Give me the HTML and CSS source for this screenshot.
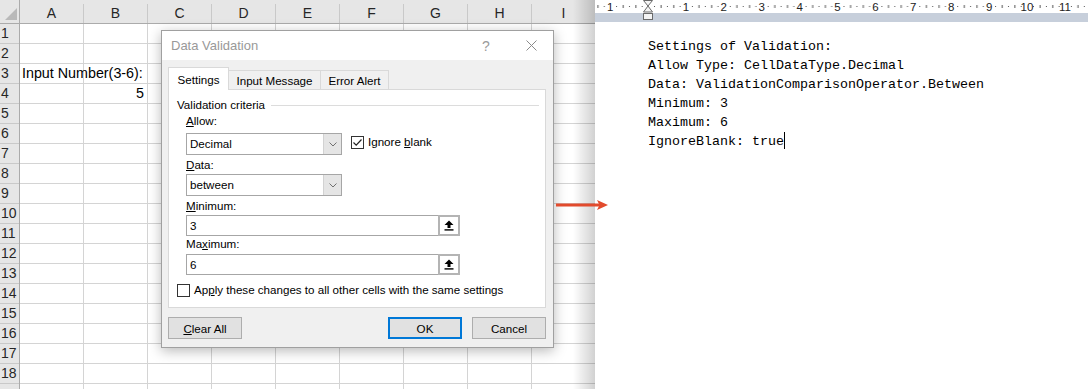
FILE: index.html
```html
<!DOCTYPE html>
<html lang="en">
<head>
  <meta charset="UTF-8">
  <title>Data Validation</title>
  <link rel="stylesheet" href="styles.css">
</head>
<body>
<div class="screen">

  <div class="excel">
    <div class="sheet">
      <div class="corner">
        <svg width="19" height="23" viewBox="0 0 19 23"><polygon points="5,20 17,20 17,8" fill="#b9b9b9"/></svg>
      </div>
      <div class="col-heads">
        <div class="col-head">A</div>
        <div class="col-head">B</div>
        <div class="col-head">C</div>
        <div class="col-head">D</div>
        <div class="col-head">E</div>
        <div class="col-head">F</div>
        <div class="col-head">G</div>
        <div class="col-head">H</div>
        <div class="col-head">I</div>
      </div>
      <div class="row-heads">
        <div class="row-head">1</div>
        <div class="row-head">2</div>
        <div class="row-head">3</div>
        <div class="row-head">4</div>
        <div class="row-head">5</div>
        <div class="row-head">6</div>
        <div class="row-head">7</div>
        <div class="row-head">8</div>
        <div class="row-head">9</div>
        <div class="row-head">10</div>
        <div class="row-head">11</div>
        <div class="row-head">12</div>
        <div class="row-head">13</div>
        <div class="row-head">14</div>
        <div class="row-head">15</div>
        <div class="row-head">16</div>
        <div class="row-head">17</div>
        <div class="row-head">18</div>
        <div class="row-head"></div>
      </div>
      <div class="cells">
        <div class="cell-text a3">Input Number(3-6):</div>
        <div class="cell-text b4">5</div>
      </div>
    </div>

    <div class="dialog">
      <div class="dlg-title">
        <span class="dlg-name">Data Validation</span>
        <span class="dlg-help">?</span>
        <span class="dlg-close">
          <svg width="11" height="11" viewBox="0 0 11 11"><path d="M0.5 0.5 L10.5 10.5 M10.5 0.5 L0.5 10.5" stroke="#8a8a8a" stroke-width="1"/></svg>
        </span>
      </div>
      <div class="dlg-body">
        <div class="tabs">
          <div class="tab active">Settings</div>
          <div class="tab t-input">Input Message</div>
          <div class="tab t-error">Error Alert</div>
        </div>
        <div class="panel">
          <div class="group-title"><span>Validation criteria</span></div>
          <div class="fields">
            <div class="label first"><u>A</u>llow:</div>
            <div class="field-row">
              <div class="combo">
                <span class="value">Decimal</span>
                <span class="drop"><svg width="8" height="5" viewBox="0 0 8 5"><polyline points="0.5,0.5 4,4 7.5,0.5" fill="none" stroke="#707070"/></svg></span>
              </div>
              <div class="check ignore">
                <span class="box"><svg width="11" height="11" viewBox="0 0 11 11"><polyline points="1.5,5.5 4.2,8.2 9.5,2.5" fill="none" stroke="#222" stroke-width="1.2"/></svg></span>
                <span>Ignore <u>b</u>lank</span>
              </div>
            </div>
            <div class="label"><u>D</u>ata:</div>
            <div class="combo control">
              <span class="value">between</span>
              <span class="drop"><svg width="8" height="5" viewBox="0 0 8 5"><polyline points="0.5,0.5 4,4 7.5,0.5" fill="none" stroke="#707070"/></svg></span>
            </div>
            <div class="label"><u>M</u>inimum:</div>
            <div class="input control">
              <span class="value">3</span>
              <span class="spin"><svg width="10" height="11" viewBox="0 0 10 11"><polygon points="5,0.5 9.5,5 6.5,5 6.5,8 3.5,8 3.5,5 0.5,5" fill="#000"/><rect x="0.5" y="9.2" width="9" height="1.4" fill="#000"/></svg></span>
            </div>
            <div class="label tight">Ma<u>x</u>imum:</div>
            <div class="input control last">
              <span class="value">6</span>
              <span class="spin"><svg width="10" height="11" viewBox="0 0 10 11"><polygon points="5,0.5 9.5,5 6.5,5 6.5,8 3.5,8 3.5,5 0.5,5" fill="#000"/><rect x="0.5" y="9.2" width="9" height="1.4" fill="#000"/></svg></span>
            </div>
          </div>
          <div class="check apply">
            <span class="box"></span>
            <span>Ap<u>p</u>ly these changes to all other cells with the same settings</span>
          </div>
        </div>
        <div class="buttons">
          <button class="btn"><u>C</u>lear All</button>
          <button class="btn ok">OK</button>
          <button class="btn cancel">Cancel</button>
        </div>
      </div>
    </div>
  </div>

  <div class="word">
    <svg class="ruler" width="493" height="22" viewBox="0 0 493 22">
      <defs>
        <pattern id="marks" x="53" y="0" width="37.9" height="13" patternUnits="userSpaceOnUse">
          <rect x="6" y="6" width="1" height="1" fill="#555"/>
          <rect x="12.6" y="5" width="1" height="3" fill="#555"/>
          <rect x="18.9" y="6" width="1" height="1" fill="#555"/>
          <rect x="25.3" y="5" width="1" height="3" fill="#555"/>
          <rect x="31.6" y="6" width="1" height="1" fill="#555"/>
        </pattern>
      </defs>
      <rect width="493" height="13" fill="#fff"/>
      <rect y="13" width="493" height="9" fill="#c7cfdb"/>
      <rect width="493" height="13" fill="url(#marks)"/>
      <g class="ruler-nums">
        <text x="15.1" y="10.5">1</text>
        <text x="90.9" y="10.5">1</text>
        <text x="128.8" y="10.5">2</text>
        <text x="166.7" y="10.5">3</text>
        <text x="204.6" y="10.5">4</text>
        <text x="242.5" y="10.5">5</text>
        <text x="280.4" y="10.5">6</text>
        <text x="318.3" y="10.5">7</text>
        <text x="356.2" y="10.5">8</text>
        <text x="394.1" y="10.5">9</text>
        <text x="432" y="10.5">10</text>
        <text x="469.9" y="10.5">11</text>
      </g>
      <g fill="#f4f4f4" stroke="#6a6a6a" stroke-width="1">
        <polygon points="48.5,0.5 57.5,0.5 53,6"/>
        <polygon points="53,6 48.5,12 57.5,12"/>
        <rect x="48.5" y="13.5" width="9" height="6"/>
      </g>
    </svg>
    <div class="doc">
      <div>Settings of Validation:</div>
      <div>Allow Type: CellDataType.Decimal</div>
      <div>Data: ValidationComparisonOperator.Between</div>
      <div>Minimum: 3</div>
      <div>Maximum: 6</div>
      <div>IgnoreBlank: true<span class="caret"></span></div>
    </div>
  </div>

  <svg class="arrow" width="56" height="14" viewBox="0 0 56 14">
    <rect x="2" y="5.5" width="44" height="3" fill="#e24b2d"/>
    <polygon points="43,2 54,7 43,12 45.5,7" fill="#e24b2d"/>
  </svg>

</div>
</body>
</html>
```

FILE: styles.css
```css
body {
  margin: 0;
  width: 1088px;
  height: 389px;
  overflow: hidden;
  font-family: "Liberation Sans", Arial, sans-serif;
  background: #fff;
}

.screen {
  display: flex;
  height: 389px;
  position: relative;
}

/* spreadsheet */

.excel {
  width: 595px;
  flex: none;
  position: relative;
  overflow: hidden;
}

.sheet {
  display: grid;
  grid-template-columns: 20px 576px;
  grid-template-rows: 24px auto;
}

.corner {
  background: #e6e6e6;
  border-right: 1px solid #ababab;
  border-bottom: 1px solid #ababab;
}

.corner svg {
  display: block;
}

.col-heads {
  display: flex;
  align-items: flex-end;
  background: #e6e6e6;
  border-bottom: 1px solid #ababab;
}

.col-head {
  width: 64px;
  height: 19px;
  flex: none;
  box-sizing: border-box;
  border-right: 1px solid #c9c9c9;
  text-align: center;
  font-size: 14px;
  line-height: 19px;
  color: #262626;
}

.row-heads {
  background: #e6e6e6;
  border-right: 1px solid #ababab;
}

.row-head {
  height: 20px;
  box-sizing: border-box;
  border-bottom: 1px solid #c9c9c9;
  padding-left: 1px;
  font-size: 14px;
  line-height: 19px;
  color: #262626;
}

.cells {
  display: grid;
  grid-template-columns: repeat(9, 64px);
  grid-template-rows: repeat(19, 20px);
  background-image:
    linear-gradient(to right, #d4d4d4 1px, transparent 1px),
    linear-gradient(to bottom, #d4d4d4 1px, transparent 1px);
  background-size: 64px 20px;
  background-position: 63px 19px;
}

.cell-text {
  font-size: 14.3px;
  line-height: 19px;
  white-space: nowrap;
  color: #000;
}

.a3 {
  grid-row: 3;
  grid-column: 1;
  padding-left: 2px;
}

.b4 {
  grid-row: 4;
  grid-column: 2;
  text-align: right;
  padding-right: 4px;
}

/* dialog */

.dialog {
  position: absolute;
  left: 161px;
  top: 30px;
  width: 393px;
  height: 318px;
  box-sizing: border-box;
  border: 1px solid #a0a0a0;
  background: #f0f0f0;
  box-shadow: 0 3px 12px rgba(0, 0, 0, 0.28);
  font-size: 11.6px;
  color: #000;
}

.dlg-title {
  height: 29px;
  background: #fff;
  display: flex;
  align-items: center;
}

.dlg-name {
  flex: 1;
  padding-left: 9px;
  font-size: 13px;
  color: #999;
}

.dlg-help {
  width: 46px;
  text-align: center;
  font-size: 14px;
  color: #9a9a9a;
}

.dlg-close {
  width: 44px;
  display: flex;
  justify-content: center;
}

.dlg-body {
  padding: 7px 7px 0 6px;
}

.tabs {
  display: flex;
  align-items: flex-end;
  height: 22px;
}

.tab {
  height: 19px;
  box-sizing: border-box;
  border: 1px solid #d9d9d9;
  border-bottom: none;
  display: flex;
  align-items: center;
  justify-content: center;
}

.tab.active {
  width: 61px;
  height: 23px;
  margin-bottom: -1px;
  background: #fff;
  position: relative;
}

.t-input {
  width: 92px;
  border-left: none;
}

.t-error {
  width: 68px;
  border-left: none;
}

.panel {
  height: 219px;
  box-sizing: border-box;
  border: 1px solid #d9d9d9;
  background: #fff;
  padding: 7px 6px 0 8px;
}

.group-title {
  display: flex;
  align-items: center;
  gap: 6px;
  line-height: 16px;
}

.group-title::after {
  content: "";
  flex: 1;
  height: 1px;
  background: #dcdcdc;
}

.fields {
  padding-left: 9px;
}

.label {
  line-height: 16px;
  margin-top: 2px;
}

.label.first,
.label.tight {
  margin-top: 0;
}

u {
  text-decoration: underline;
  text-underline-offset: 1px;
}

.field-row {
  display: flex;
  align-items: flex-start;
  margin-top: 4px;
}

.control {
  margin-top: 1px;
}

.control.last {
  margin-top: 2px;
}

.combo {
  width: 156px;
  height: 22px;
  box-sizing: border-box;
  border: 1px solid #a6a6a6;
  background: #fff;
  display: flex;
}

.value {
  flex: 1;
  padding-left: 3px;
  line-height: 20px;
}

.drop {
  width: 17px;
  background: #e5e5e5;
  border-left: 1px solid #d2d2d2;
  display: flex;
  align-items: center;
  justify-content: center;
}

.input {
  width: 274px;
  height: 21px;
  box-sizing: border-box;
  border: 1px solid #a6a6a6;
  background: #fff;
  display: flex;
}

.input .value {
  line-height: 19px;
}

.spin {
  width: 22px;
  margin: -1px -1px -1px 0;
  box-sizing: border-box;
  border: 2px solid #b4b4b4;
  background: #fff;
  display: flex;
  align-items: center;
  justify-content: center;
}

.check {
  display: flex;
  align-items: center;
  gap: 4px;
  line-height: 16px;
}

.box {
  width: 13px;
  height: 13px;
  box-sizing: border-box;
  border: 1px solid #333;
  background: #fff;
  display: flex;
  align-items: center;
  justify-content: center;
}

.ignore {
  margin: 1px 0 0 9px;
}

.apply {
  margin-top: 7px;
}

.buttons {
  display: flex;
  margin-top: 9px;
}

.btn {
  width: 74px;
  height: 22px;
  padding: 0;
  font: inherit;
  color: #000;
  background: #e1e1e1;
  border: 1px solid #adadad;
}

.btn.ok {
  margin-left: auto;
  border: 2px solid #0078d7;
}

.btn.cancel {
  margin-left: 10px;
}

/* document */

.word {
  flex: 1;
  position: relative;
  background: #fff;
}

.word::before {
  content: "";
  position: absolute;
  right: 100%;
  top: 0;
  bottom: 0;
  width: 22px;
  background: linear-gradient(to right, rgba(0, 0, 0, 0), rgba(0, 0, 0, 0.18));
}

.ruler {
  display: block;
}

.ruler-nums text {
  font-family: "Liberation Sans", Arial, sans-serif;
  font-size: 11.5px;
  text-anchor: middle;
  fill: #222;
}

.doc {
  padding: 15px 0 0 53px;
  font-family: "Liberation Mono", monospace;
  font-size: 13.33px;
  line-height: 19px;
  white-space: nowrap;
  color: #000;
}

.caret {
  display: inline-block;
  width: 1px;
  height: 17px;
  background: #000;
  vertical-align: -4px;
}

.arrow {
  position: absolute;
  left: 554px;
  top: 198px;
}
```
